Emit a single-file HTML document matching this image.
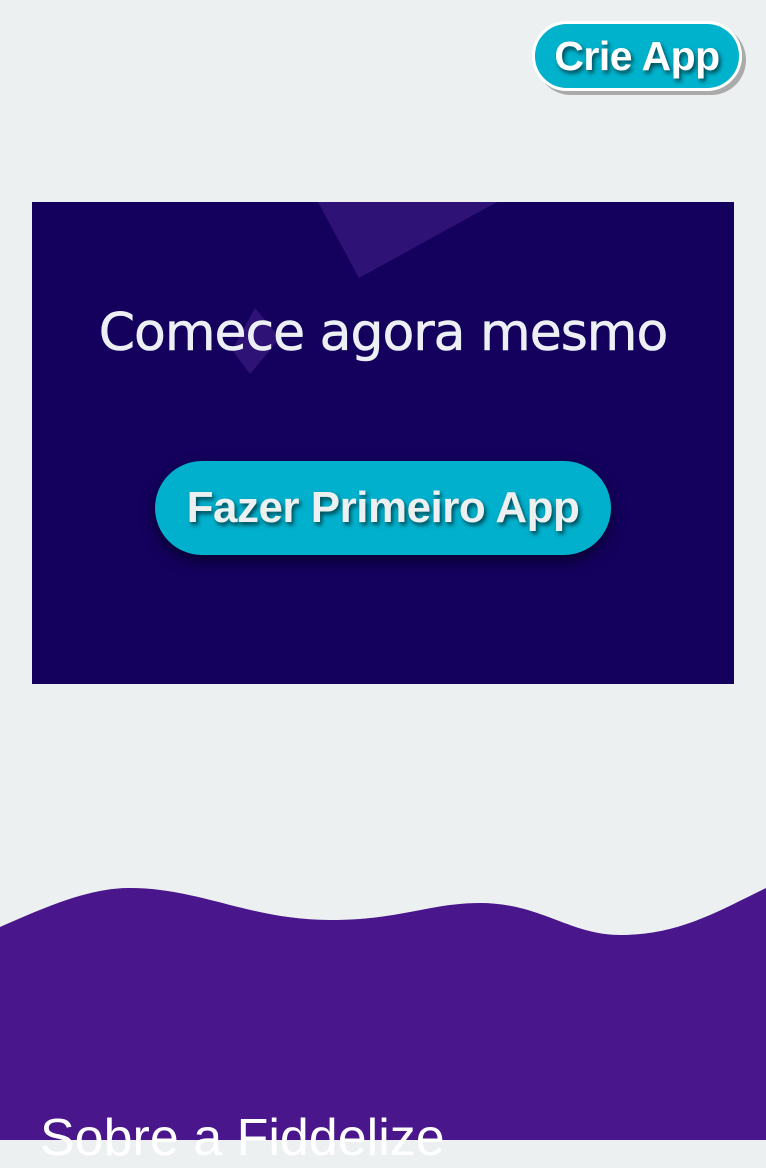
<!DOCTYPE html>
<html><head><style>
html,body{margin:0;padding:0;width:766px;height:1140px;overflow:hidden;background:#ecf0f1;font-family:"Liberation Sans",sans-serif;}
.crie{position:absolute;left:532px;top:21px;width:210px;height:70px;box-sizing:border-box;border-radius:35px;background:#00b2cc;border:3px solid #fff;box-shadow:4px 4px 0 #aaa;color:#fff;font-weight:bold;font-size:41px;line-height:64px;text-align:center;text-shadow:2px 3px 4px rgba(0,0,0,.6);letter-spacing:-0.5px;}
.box{position:absolute;left:32px;top:202px;width:702px;height:482px;background:#13015d;overflow:hidden;}
h1{position:absolute;left:0;width:766px;top:303px;margin:0;text-align:center;color:#eceff4;font-size:52px;font-weight:normal;font-family:"DejaVu Sans","Liberation Sans",sans-serif;letter-spacing:-1px;-webkit-text-stroke:0.6px #eceff4;}
.btn{position:absolute;left:155px;top:461px;width:456px;height:94px;border-radius:47px;background:#00b0cc;color:#ecf0f1;font-size:44px;font-weight:bold;line-height:94px;text-align:center;text-shadow:2px 3px 4px rgba(0,0,0,.6);box-shadow:0 6px 14px rgba(0,0,0,.5);letter-spacing:-0.5px;}
.about{position:absolute;left:40px;top:1108px;color:#fff;font-size:52px;margin:0;line-height:60px;white-space:nowrap;}
</style></head><body>
<div class="crie">Crie App</div>
<div class="box"></div>
<svg style="position:absolute;left:0;top:0" width="766" height="1140">
<polygon points="318,202 497,202 359,278" fill="#2f1276"/>
<polygon points="255,308 280,338 250,374 232,350" fill="#2f1276"/>
<path d="M0,927 C50,905 90,888 130,888 C200,888 250,920 330,920 C400,920 430,903 480,903 C540,903 570,935 620,935 C680,935 720,910 766,888 L766,1140 L0,1140 Z" fill="#4a168c"/>
</svg>
<h1>Comece agora mesmo</h1>
<div class="btn">Fazer Primeiro App</div>
<p class="about">Sobre a Fiddelize</p>
</body></html>
